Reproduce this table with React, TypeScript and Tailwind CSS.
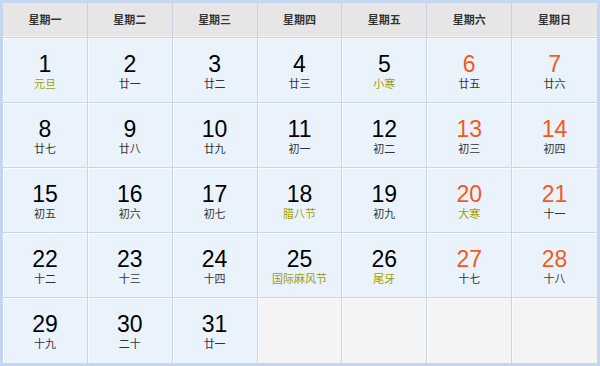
import React from 'react';

type Day = { d: number; lunar: string; fest?: boolean };

const weekdays = ['星期一', '星期二', '星期三', '星期四', '星期五', '星期六', '星期日'];

const days: Day[] = [
    { d: 1, lunar: '元旦', fest: true },
    { d: 2, lunar: '廿一' },
    { d: 3, lunar: '廿二' },
    { d: 4, lunar: '廿三' },
    { d: 5, lunar: '小寒', fest: true },
    { d: 6, lunar: '廿五' },
    { d: 7, lunar: '廿六' },
    { d: 8, lunar: '廿七' },
    { d: 9, lunar: '廿八' },
    { d: 10, lunar: '廿九' },
    { d: 11, lunar: '初一' },
    { d: 12, lunar: '初二' },
    { d: 13, lunar: '初三' },
    { d: 14, lunar: '初四' },
    { d: 15, lunar: '初五' },
    { d: 16, lunar: '初六' },
    { d: 17, lunar: '初七' },
    { d: 18, lunar: '腊八节', fest: true },
    { d: 19, lunar: '初九' },
    { d: 20, lunar: '大寒', fest: true },
    { d: 21, lunar: '十一' },
    { d: 22, lunar: '十二' },
    { d: 23, lunar: '十三' },
    { d: 24, lunar: '十四' },
    { d: 25, lunar: '国际麻风节', fest: true },
    { d: 26, lunar: '尾牙', fest: true },
    { d: 27, lunar: '十七' },
    { d: 28, lunar: '十八' },
    { d: 29, lunar: '十九' },
    { d: 30, lunar: '二十' },
    { d: 31, lunar: '廿一' },
];

export default function App() {
    const cells: (Day | null)[] = [...days, null, null, null, null];

    return (
        <div className="w-[600px] h-[366px] bg-white border-[3px] border-[#c4d6f0] overflow-hidden font-['Liberation_Sans','Noto_Sans_CJK_SC',sans-serif]">
            <div className="grid grid-cols-7">
                {weekdays.map((w, i) => (
                    <div
                        key={w}
                        className={`h-[35px] flex items-center justify-center bg-[#e6e6e6] border-b border-[#c9d3e0] shadow-[inset_0_-1px_0_#f4f4f4] text-[11px] font-bold text-[#333] ${i < 6 ? 'border-r' : ''}`}
                    >
                        {w}
                    </div>
                ))}
                {cells.map((c, i) => {
                    const col = i % 7;
                    const weekend = col >= 5;
                    const lastRow = i >= 28;
                    return (
                        <div
                            key={i}
                            className={`h-[65px] flex flex-col items-center pt-[13px] border-[#c9d6e8] shadow-[inset_1px_1px_0_#f8fbff] ${col < 6 ? 'border-r' : ''} ${lastRow ? '' : 'border-b'} ${c ? 'bg-[#eaf3fc]' : 'bg-[#f4f4f4]'}`}
                        >
                            {c && (
                                <>
                                    <span className={`text-[23px] leading-[26px] ${weekend ? 'text-[#f25a1d]' : 'text-black'}`}>
                                        {c.d}
                                    </span>
                                    <span className={`text-[11px] leading-[15px] ${c.fest ? 'text-[#9e9e00]' : 'text-[#333]'}`}>
                                        {c.lunar}
                                    </span>
                                </>
                            )}
                        </div>
                    );
                })}
            </div>
        </div>
    );
}
